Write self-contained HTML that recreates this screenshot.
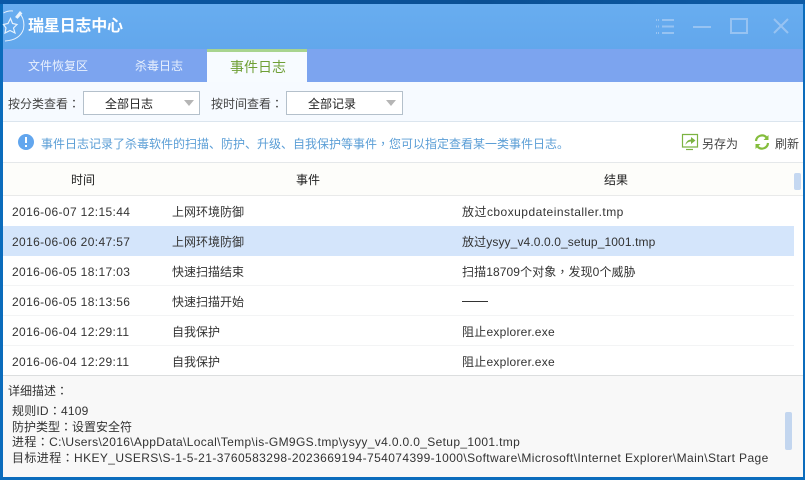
<!DOCTYPE html>
<html><head><meta charset="utf-8">
<style>
html,body{margin:0;padding:0;background:#0b5aa6;}
#r{position:relative;width:805px;height:480px;overflow:hidden;background:#0b6cbc;font-family:"Liberation Sans","Noto Sans CJK SC",sans-serif;font-size:12px;color:#333;}
#r div{position:absolute;}
.t{white-space:nowrap;line-height:16px;}
.d{letter-spacing:.36px;color:#333;}
.l{height:1px;left:3px;width:800px;}
.p{font-family:"Noto Sans CJK TC",sans-serif;}
</style></head><body>
<div id="r">
<div style="left:0;top:0;width:805px;height:4px;background:linear-gradient(90deg,#0a58a6,#0a4f94 60%,#0d5ba6)"></div>
<div style="left:3px;top:4px;width:800px;height:45px;background:linear-gradient(#68adf0,#62a7ec)"></div>
<svg style="position:absolute;left:0;top:0" width="30" height="50" viewBox="0 0 30 50" fill="none" stroke="#e8f3fd" stroke-width="1"><path d="M3.500 13 Q8 10.500 13 11"/><path d="M21 15 Q25 21 23.500 29 Q20 40 5 41"/><path d="M10.500 18.500 L12.500 23.500 L17 24.500 L13.500 28 L15 33 L10 30.500 L5 33 L6 28 L3.500 24.500 L8 23.500 Z" stroke-width="1.200"/><path d="M15.500 17 L20 11.500 L22 13.500 L17.500 18.500 Z" fill="#e8f3fd" stroke-width=".6"/></svg>
<div class="t" style="left:28px;top:17px;font-size:16px;line-height:20px;color:#fff;font-weight:bold;letter-spacing:-.2px">瑞星日志中心</div>
<svg style="position:absolute;left:650px;top:13px" width="150" height="24" viewBox="0 0 150 24" fill="none" stroke="#97c3f2" stroke-width="2"><path d="M12 7H24M12 13.500H24M12 20H24"/><path d="M6 7H9M6 13.500H9M6 20H9" stroke-dasharray="1 1"/><path d="M43 14H61"/><rect x="81" y="6" width="16" height="14"/><path d="M124 6L138 20M138 6L124 20"/></svg>

<div style="left:3px;top:49px;width:800px;height:33px;background:#7ca4ef"></div>
<div style="left:207px;top:49px;width:100px;height:33px;background:#f7fbff"></div>
<div style="left:207px;top:49px;width:100px;height:3px;background:#a8d48f"></div>
<div class="t" style="left:28px;top:58px;color:#e9f1fd">文件恢复区</div>
<div class="t" style="left:135px;top:58px;color:#e9f1fd">杀毒日志</div>
<div class="t" style="left:230px;top:59px;color:#6e9f35;font-size:14px">事件日志</div>

<div style="left:3px;top:82px;width:800px;height:39px;background:#f6faff"></div>
<div class="l" style="top:121px;background:#dbe5ee"></div>
<div class="t" style="left:8px;top:96px;color:#444">按分类查看<span class="p">：</span></div>
<div style="left:83px;top:91px;width:115px;height:22px;border:1px solid #b4c0cb;background:#fff"></div>
<div class="t" style="left:105px;top:96px;color:#222">全部日志</div>
<div style="left:184px;top:100px;width:0;height:0;border-left:5px solid transparent;border-right:5px solid transparent;border-top:6px solid #b5b5b5"></div>
<div class="t" style="left:211px;top:96px;color:#444">按时间查看<span class="p">：</span></div>
<div style="left:286px;top:91px;width:115px;height:22px;border:1px solid #b4c0cb;background:#fff"></div>
<div class="t" style="left:308px;top:96px;color:#222">全部记录</div>
<div style="left:386px;top:100px;width:0;height:0;border-left:5px solid transparent;border-right:5px solid transparent;border-top:6px solid #b5b5b5"></div>

<div style="left:3px;top:122px;width:800px;height:40px;background:#fff"></div>
<div class="l" style="top:162px;background:#e5e8ea"></div>
<div style="left:18px;top:134px;width:16px;height:16px;border-radius:50%;background:#62a6ee"></div>
<div style="left:25px;top:137px;width:2px;height:6px;background:#fff"></div>
<div style="left:25px;top:145px;width:2px;height:2px;background:#fff"></div>
<div class="t" style="left:41px;top:136px;color:#5b9ed6">事件日志记录了杀毒软件的扫描、防护、升级、自我保护等事件<span class="p">，</span>您可以指定查看某一类事件日志。</div>
<svg style="position:absolute;left:681px;top:133px" width="18" height="18" viewBox="0 0 18 18" fill="none"><path d="M1.500 1.500H16.500V14H1.500Z" stroke="#7cb342" stroke-width="1.200"/><path d="M5 16.500H12" stroke="#7cb342" stroke-width="1.200"/><path d="M4.500 12 Q5 7 10 6.500V4L14.500 7.500L10 11V8.500 Q6.500 8.500 4.500 12Z" fill="#7cb342"/></svg>
<div class="t" style="left:702px;top:136px;color:#444">另存为</div>
<svg style="position:absolute;left:754px;top:134px" width="16" height="16" viewBox="0 0 16 16" fill="none" stroke="#84bd3c" stroke-width="2.200"><path d="M2 7 A6 6 0 0 1 12.500 3.500"/><path d="M14 9 A6 6 0 0 1 3.500 12.500"/><path d="M14.500 1V6H9.500Z" fill="#84bd3c" stroke="none"/><path d="M1.500 15V10H6.500Z" fill="#84bd3c" stroke="none"/></svg>
<div class="t" style="left:775px;top:136px;color:#444">刷新</div>

<div style="left:3px;top:163px;width:800px;height:32px;background:#fdfdfa"></div>
<div class="l" style="top:195px;background:#e9eaea"></div>
<div class="t" style="left:71px;top:172px;color:#222">时间</div>
<div class="t" style="left:296px;top:172px;color:#222">事件</div>
<div class="t" style="left:604px;top:172px;color:#222">结果</div>
<div style="left:794px;top:173px;width:7px;height:17px;border-radius:2px;background:#c5d8f1"></div>

<div style="left:3px;top:196px;width:800px;height:180px;background:#fff"></div>
<div style="left:3px;top:226px;width:791px;height:30px;background:#d4e5fb"></div>
<div style="left:3px;top:285px;width:791px;height:1px;background:#f3f4f5"></div>
<div style="left:3px;top:315px;width:791px;height:1px;background:#f3f4f5"></div>
<div style="left:3px;top:345px;width:791px;height:1px;background:#f3f4f5"></div>

<div class="t d" style="left:12px;top:204px">2016-06-07 12:15:44</div>
<div class="t" style="left:172px;top:204px">上网环境防御</div>
<div class="t" style="left:462px;top:204px;letter-spacing:.47px">放过cboxupdateinstaller.tmp</div>
<div class="t d" style="left:12px;top:234px">2016-06-06 20:47:57</div>
<div class="t" style="left:172px;top:234px">上网环境防御</div>
<div class="t" style="left:462px;top:234px;letter-spacing:.11px">放过ysyy_v4.0.0.0_setup_1001.tmp</div>
<div class="t d" style="left:12px;top:264px">2016-06-05 18:17:03</div>
<div class="t" style="left:172px;top:264px">快速扫描结束</div>
<div class="t" style="left:462px;top:264px;letter-spacing:.1px">扫描18709个对象<span class="p">，</span>发现0个威胁</div>
<div class="t d" style="left:12px;top:294px">2016-06-05 18:13:56</div>
<div class="t" style="left:172px;top:294px">快速扫描开始</div>
<div style="left:462px;top:301px;width:26px;height:1px;background:#333"></div>
<div class="t d" style="left:12px;top:324px">2016-06-04 12:29:11</div>
<div class="t" style="left:172px;top:324px">自我保护</div>
<div class="t" style="left:462px;top:324px;letter-spacing:.25px">阻止explorer.exe</div>
<div class="t d" style="left:12px;top:354px">2016-06-04 12:29:11</div>
<div class="t" style="left:172px;top:354px">自我保护</div>
<div class="t" style="left:462px;top:354px;letter-spacing:.25px">阻止explorer.exe</div>

<div style="left:3px;top:375px;width:800px;height:1px;background:#dcdedf"></div>
<div style="left:3px;top:376px;width:800px;height:101px;background:#f8f8f8"></div>
<div class="t" style="left:8px;top:383px">详细描述<span class="p">：</span></div>
<div class="t" style="left:12px;top:403px;letter-spacing:.2px">规则ID<span class="p">：</span>4109</div>
<div class="t" style="left:12px;top:419px">防护类型<span class="p">：</span>设置安全符</div>
<div class="t" style="left:12px;top:434px;letter-spacing:.345px">进程<span class="p">：</span>C:\Users\2016\AppData\Local\Temp\is-GM9GS.tmp\ysyy_v4.0.0.0_Setup_1001.tmp</div>
<div class="t" style="left:12px;top:450px;letter-spacing:.4px">目标进程<span class="p">：</span>HKEY_USERS\S-1-5-21-3760583298-2023669194-754074399-1000\Software\Microsoft\Internet Explorer\Main\Start Page</div>
<div style="left:785px;top:412px;width:7px;height:38px;border-radius:2px;background:#c3d6ef"></div>
</div>
</body></html>
